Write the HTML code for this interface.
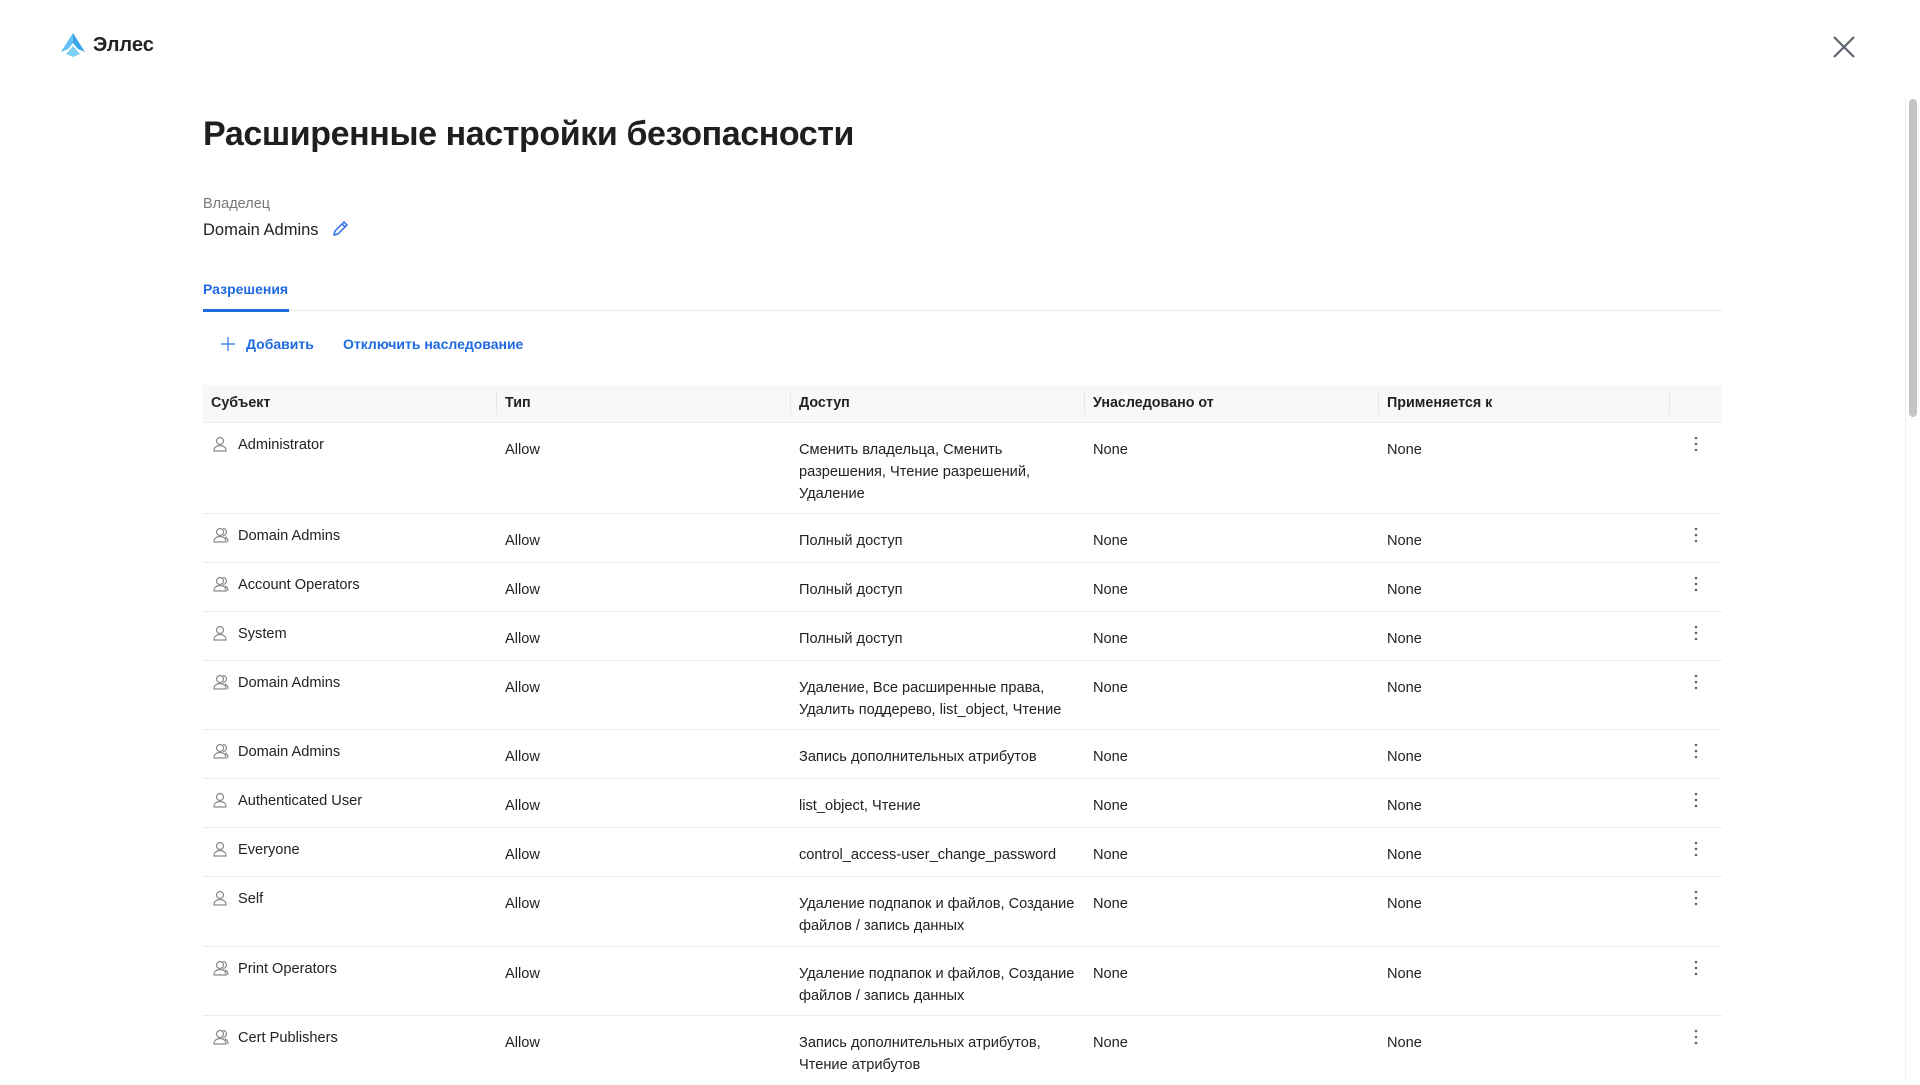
<!DOCTYPE html>
<html><head><meta charset="utf-8"><style>
*{box-sizing:border-box;margin:0;padding:0}
body{width:1920px;height:1080px;overflow:hidden;background:#fff;font-family:"Liberation Sans",sans-serif;color:#222;position:relative}
.abs{position:absolute}
table{border-collapse:collapse;position:absolute;left:203px;top:385px;width:1519px;font-size:14.6px;table-layout:fixed}
th{background:#f8f8f8;height:37px;text-align:left;font-weight:bold;font-size:14.3px;padding:0 8px;position:relative}
th .sep{position:absolute;right:0;top:7px;bottom:7px;width:1px;background:#e8e8e8}
td{vertical-align:top;padding:16px 8px 0;line-height:22px;border-top:1px solid #ececec;white-space:nowrap}
td.s{padding-top:11px;color:#222}
td.s svg{vertical-align:-4px;margin-right:9px}
td.d{text-align:center;padding-top:12px}
</style></head><body>
<svg class="abs" style="left:60px;top:32px" width="26" height="26" viewBox="0 0 26 26"><path d="M13 1 L25 20 L18 17 L13 11 L8 17 L1 20 Z" fill="#3aa6e8"/><path d="M13 14 L20 22 L13 25 L6 22 Z" fill="#7fd0f7"/><path d="M13 1 L13 11 L8 17 L1 20Z" fill="#64c2f4"/></svg>
<div class="abs" style="left:93px;top:34px;font-size:20px;font-weight:bold">Эллес</div>
<svg class="abs" style="left:1832px;top:35px" width="24" height="24" viewBox="0 0 24 24"><path d="M2 2L22 22M22 2L2 22" stroke="#5f6470" stroke-width="2.2"/></svg>
<div class="abs" style="left:203px;top:115px;font-size:34px;font-weight:bold;color:#1f1f1f;letter-spacing:-0.4px">Расширенные настройки безопасности</div>
<div class="abs" style="left:203px;top:196px;font-size:14.5px;color:#777">Владелец</div>
<div class="abs" style="left:203px;top:221px;font-size:16.5px;color:#222">Domain Admins</div>
<svg class="abs" style="left:331px;top:220px" width="18" height="18" viewBox="0 0 18 18"><path d="M3 15 L4 11 L13 2 L16 5 L7 14 Z M11 4 L14 7" fill="none" stroke="#2b6de5" stroke-width="1.5"/></svg>
<div class="abs" style="left:203px;top:281px;font-size:14px;font-weight:bold;color:#1e6ae0">Разрешения</div>
<div class="abs" style="left:203px;top:309px;width:86px;height:3px;background:#1e6ae0"></div>
<div class="abs" style="left:289px;top:310px;width:1433px;height:1px;background:#e8e8e8"></div>
<svg class="abs" style="left:221px;top:337px" width="14" height="14"><path d="M7 0V14M0 7H14" stroke="#4a86e8" stroke-width="1.4"/></svg>
<div class="abs" style="left:246px;top:336px;font-size:14px;font-weight:bold;color:#1e6ae0">Добавить</div>
<div class="abs" style="left:343px;top:336px;font-size:14px;font-weight:bold;color:#1e6ae0">Отключить наследование</div>
<div class="abs" style="left:1905px;top:97px;width:1px;height:983px;background:#eee"></div>
<div class="abs" style="left:1909px;top:99px;width:8px;height:318px;background:#c4c4c4;border-radius:4px"></div>
<table>
<colgroup><col style="width:294px"><col style="width:294px"><col style="width:294px"><col style="width:294px"><col style="width:291px"><col></colgroup>
<tr><th>Субъект<span class="sep"></span></th><th>Тип<span class="sep"></span></th><th>Доступ<span class="sep"></span></th><th>Унаследовано от<span class="sep"></span></th><th>Применяется к<span class="sep"></span></th><th></th></tr>
<tbody id="tb"></tbody>
</table>
<script>
const u='<svg width="18" height="18" viewBox="0 0 18 18" fill="none" stroke="#8a8a8a" stroke-width="1.2"><circle cx="9" cy="6" r="3.5"/><path d="M3 16c0-3.5 2.5-5.5 6-5.5s6 2 6 5.5z"/></svg>';
const g='<svg width="18" height="18" viewBox="0 0 18 18" fill="none" stroke="#8a8a8a" stroke-width="1.2"><circle cx="9" cy="6" r="3.5"/><path d="M3 16c0-3.5 2.5-5.5 6-5.5s6 2 6 5.5z"/><path d="M12 2.5a3.5 3.5 0 0 1 0 7M14 11c2 .7 3 2.5 3 5"/></svg>';
const dots='<svg width="4" height="18"><circle cx="2" cy="3" r="1.3" fill="#666"/><circle cx="2" cy="9" r="1.3" fill="#666"/><circle cx="2" cy="15" r="1.3" fill="#666"/></svg>';
const rows=[[u,'Administrator','Сменить владельца, Сменить<br>разрешения, Чтение разрешений,<br>Удаление',91],
[g,'Domain Admins','Полный доступ',49],[g,'Account Operators','Полный доступ',49],[u,'System','Полный доступ',49],
[g,'Domain Admins','Удаление, Все расширенные права,<br>Удалить поддерево, list_object, Чтение',69],
[g,'Domain Admins','Запись дополнительных атрибутов',49],[u,'Authenticated User','list_object, Чтение',49],
[u,'Everyone','control_access-user_change_password',49],[u,'Self','Удаление подпапок и файлов, Создание<br>файлов / запись данных',70],
[g,'Print Operators','Удаление подпапок и файлов, Создание<br>файлов / запись данных',69],[g,'Cert Publishers','Запись дополнительных атрибутов,<br>Чтение атрибутов',70]];
let h='';for(const r of rows)h+=`<tr style="height:${r[3]}px"><td class="s">${r[0]}${r[1]}</td><td>Allow</td><td>${r[2]}</td><td>None</td><td>None</td><td class="d">${dots}</td></tr>`;
document.getElementById('tb').innerHTML=h;
</script>
</body></html>
